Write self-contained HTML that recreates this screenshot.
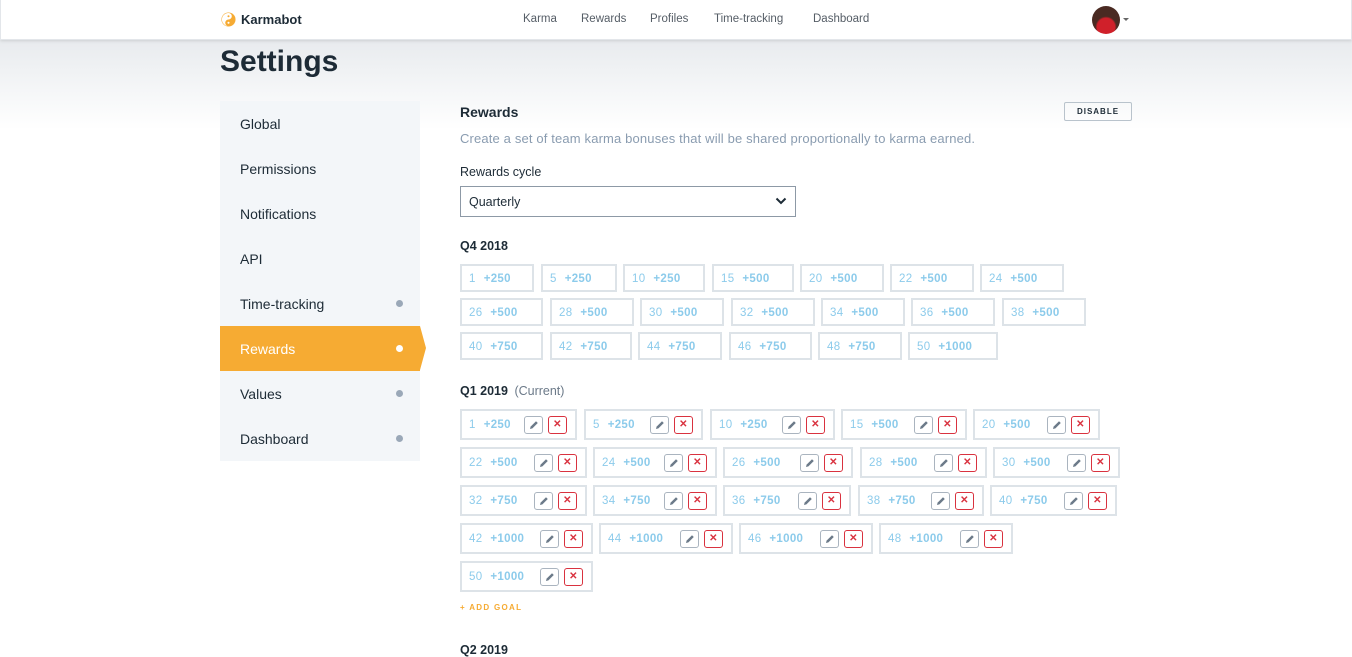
<!DOCTYPE html>
<html><head><meta charset="utf-8"><style>
*{box-sizing:border-box;margin:0;padding:0}
body{width:1352px;height:657px;overflow:hidden;font-family:"Liberation Sans",sans-serif;background:#fff;position:relative;color:#1d2b36}
.bg{position:absolute;left:0;top:40px;width:1352px;height:90px;background:linear-gradient(#e8ebee,#fff)}
.hdr{position:absolute;left:0;top:0;width:1352px;height:40px;background:#fff;box-shadow:0 1px 3px rgba(0,0,0,.12);border:1px solid #e3e6ea;border-top:none}
.nav{position:absolute;top:13px;font-size:11.5px;color:#555d66}
h1{position:absolute;left:220px;top:45px;font-size:30px;font-weight:bold;color:#1d2b36}
.side{position:absolute;left:220px;top:101px;width:200px;height:360px;background:#f3f6f9}
.si{position:absolute;left:0;width:200px;height:45px;padding-left:20px;line-height:46px;font-size:14px;color:#1d2b36}
.dot{position:absolute;left:176px;top:19px;width:7px;height:7px;border-radius:50%;background:#9aa8b8}
.act{background:#f6ab33;color:#fff}
.act .dot{background:#fff}
.arr{position:absolute;left:200px;top:0;width:0;height:0;border-top:22.5px solid transparent;border-bottom:22.5px solid transparent;border-left:6px solid #f6ab33}
.t{position:absolute;font-size:12.5px;color:#1d2b36}
.c{position:absolute;height:28px;border:2px solid #dde3e8;font-size:11.5px;letter-spacing:.3px;color:#8ccbeb;padding-left:7px;line-height:26px;white-space:nowrap}
.c b{margin-left:8px;font-weight:bold}
.d{height:31px;line-height:28px}
.p,.x{position:absolute;top:5px;width:19px;height:18px;border:1px solid #aab4bf;border-radius:3px;font-size:10px;line-height:16px;text-align:center;color:#6c7a89}
.x{border-color:#d9323f;color:#d9323f;font-weight:bold;right:8px}
.p{right:32px}
.p svg{position:absolute;left:4px;top:3px}
</style></head><body>
<div class="bg"></div>
<div class="hdr">
<svg style="position:absolute;left:220px;top:12px" width="15" height="15" viewBox="0 0 16 16"><circle cx="8" cy="8" r="7.5" fill="#f6ab33"/><path d="M8 1a3.5 3.5 0 0 1 0 7a3.5 3.5 0 0 0 0 7a7 7 0 0 1 0-14z" fill="#fff"/><circle cx="8" cy="4.5" r="1.1" fill="#f6ab33"/><circle cx="8" cy="11.5" r="1.1" fill="#fff"/></svg>
<div style="position:absolute;left:240px;top:12px;font-size:13px;font-weight:bold">Karmabot</div>
<div class="nav" style="left:522px">Karma</div><div class="nav" style="left:580px">Rewards</div><div class="nav" style="left:649px">Profiles</div><div class="nav" style="left:713px">Time-tracking</div><div class="nav" style="left:812px">Dashboard</div>
<div style="position:absolute;left:1091px;top:6px;width:28px;height:28px;border-radius:50%;background:radial-gradient(circle at 50% 75%,#d0202a 0 35%,#4a2a22 42%)"></div>
<div style="position:absolute;left:1122px;top:18px;border-left:3px solid transparent;border-right:3px solid transparent;border-top:3px solid #666"></div>
</div>
<h1>Settings</h1>
<div class="side">
<div class="si" style="top:0">Global</div>
<div class="si" style="top:45px">Permissions</div>
<div class="si" style="top:90px">Notifications</div>
<div class="si" style="top:135px">API</div>
<div class="si" style="top:180px">Time-tracking<span class="dot"></span></div>
<div class="si act" style="top:225px">Rewards<span class="dot"></span><span class="arr"></span></div>
<div class="si" style="top:270px">Values<span class="dot"></span></div>
<div class="si" style="top:315px">Dashboard<span class="dot"></span></div>
</div>
<div class="t" style="left:460px;top:104px;font-size:14px;font-weight:bold">Rewards</div>
<div style="position:absolute;left:1064px;top:102px;width:68px;height:19px;border:1px solid #b9c3cc;border-radius:2px;font-size:8px;font-weight:bold;letter-spacing:1px;text-align:center;line-height:17px">DISABLE</div>
<div class="t" style="left:460px;top:131px;font-size:13px;color:#8a9cb0;letter-spacing:.15px">Create a set of team karma bonuses that will be shared proportionally to karma earned.</div>
<div class="t" style="left:460px;top:165px;font-size:12.5px">Rewards cycle</div>
<div style="position:absolute;left:460px;top:186px;width:336px;height:31px;border:1px solid #8d99a6;font-size:12.5px;padding-left:8px;line-height:30px">Quarterly
<svg style="position:absolute;right:8px;top:10px" width="12" height="8" viewBox="0 0 12 8"><path d="M1.5 1.5L6 6l4.5-4.5" stroke="#1d2b36" stroke-width="2" fill="none"/></svg></div>
<div class="t" style="left:460px;top:239px;font-weight:bold">Q4 2018</div>

<div class="c" style="left:460px;top:264px;width:74px">1<b>+250</b></div>
<div class="c" style="left:541px;top:264px;width:76px">5<b>+250</b></div>
<div class="c" style="left:623px;top:264px;width:82px">10<b>+250</b></div>
<div class="c" style="left:712px;top:264px;width:82px">15<b>+500</b></div>
<div class="c" style="left:800px;top:264px;width:84px">20<b>+500</b></div>
<div class="c" style="left:890px;top:264px;width:84px">22<b>+500</b></div>
<div class="c" style="left:980px;top:264px;width:84px">24<b>+500</b></div>

<div class="c" style="left:460px;top:298px;width:83px">26<b>+500</b></div>
<div class="c" style="left:550px;top:298px;width:84px">28<b>+500</b></div>
<div class="c" style="left:640px;top:298px;width:84px">30<b>+500</b></div>
<div class="c" style="left:731px;top:298px;width:84px">32<b>+500</b></div>
<div class="c" style="left:821px;top:298px;width:84px">34<b>+500</b></div>
<div class="c" style="left:911px;top:298px;width:84px">36<b>+500</b></div>
<div class="c" style="left:1002px;top:298px;width:84px">38<b>+500</b></div>

<div class="c" style="left:460px;top:332px;width:83px">40<b>+750</b></div>
<div class="c" style="left:550px;top:332px;width:82px">42<b>+750</b></div>
<div class="c" style="left:638px;top:332px;width:84px">44<b>+750</b></div>
<div class="c" style="left:729px;top:332px;width:83px">46<b>+750</b></div>
<div class="c" style="left:818px;top:332px;width:84px">48<b>+750</b></div>
<div class="c" style="left:908px;top:332px;width:90px">50<b>+1000</b></div>

<div class="t" style="left:460px;top:384px;font-weight:bold">Q1 2019 <span style="font-weight:normal;color:#6c7a89;margin-left:3px">(Current)</span></div>

<div class="c d" style="left:460px;top:409px;width:117px">1<b>+250</b><span class="p"></span><span class="x">✕</span></div>
<div class="c d" style="left:584px;top:409px;width:119px">5<b>+250</b><span class="p"></span><span class="x">✕</span></div>
<div class="c d" style="left:710px;top:409px;width:125px">10<b>+250</b><span class="p"></span><span class="x">✕</span></div>
<div class="c d" style="left:841px;top:409px;width:126px">15<b>+500</b><span class="p"></span><span class="x">✕</span></div>
<div class="c d" style="left:973px;top:409px;width:127px">20<b>+500</b><span class="p"></span><span class="x">✕</span></div>

<div class="c d" style="left:460px;top:447px;width:127px">22<b>+500</b><span class="p"></span><span class="x">✕</span></div>
<div class="c d" style="left:593px;top:447px;width:124px">24<b>+500</b><span class="p"></span><span class="x">✕</span></div>
<div class="c d" style="left:723px;top:447px;width:130px">26<b>+500</b><span class="p"></span><span class="x">✕</span></div>
<div class="c d" style="left:860px;top:447px;width:127px">28<b>+500</b><span class="p"></span><span class="x">✕</span></div>
<div class="c d" style="left:993px;top:447px;width:127px">30<b>+500</b><span class="p"></span><span class="x">✕</span></div>

<div class="c d" style="left:460px;top:485px;width:127px">32<b>+750</b><span class="p"></span><span class="x">✕</span></div>
<div class="c d" style="left:593px;top:485px;width:124px">34<b>+750</b><span class="p"></span><span class="x">✕</span></div>
<div class="c d" style="left:723px;top:485px;width:128px">36<b>+750</b><span class="p"></span><span class="x">✕</span></div>
<div class="c d" style="left:858px;top:485px;width:126px">38<b>+750</b><span class="p"></span><span class="x">✕</span></div>
<div class="c d" style="left:990px;top:485px;width:127px">40<b>+750</b><span class="p"></span><span class="x">✕</span></div>

<div class="c d" style="left:460px;top:523px;width:133px">42<b>+1000</b><span class="p"></span><span class="x">✕</span></div>
<div class="c d" style="left:599px;top:523px;width:134px">44<b>+1000</b><span class="p"></span><span class="x">✕</span></div>
<div class="c d" style="left:739px;top:523px;width:134px">46<b>+1000</b><span class="p"></span><span class="x">✕</span></div>
<div class="c d" style="left:879px;top:523px;width:134px">48<b>+1000</b><span class="p"></span><span class="x">✕</span></div>

<div class="c d" style="left:460px;top:561px;width:133px">50<b>+1000</b><span class="p"></span><span class="x">✕</span></div>

<div class="t" style="left:460px;top:603px;font-size:8px;font-weight:bold;letter-spacing:1.3px;color:#f6ab33">+ ADD GOAL</div>
<div class="t" style="left:460px;top:643px;font-weight:bold">Q2 2019</div>
<script>
document.querySelectorAll('.p').forEach(function(e){e.innerHTML='<svg width="10" height="10" viewBox="0 0 10 10"><path d="M1 9l.6-2.4L7 1.2l1.8 1.8L3.4 8.4z" fill="#6c7a89"/></svg>';});
</script>
</body></html>
